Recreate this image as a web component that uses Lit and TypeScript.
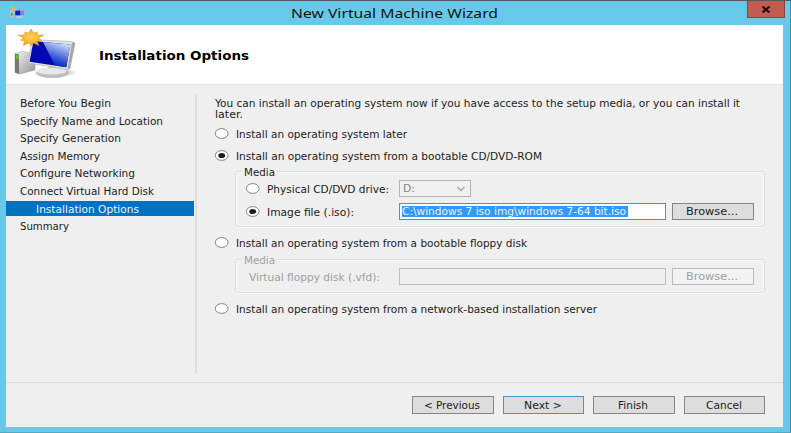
import { LitElement, html, svg, css, nothing } from "lit";
import { customElement } from "lit/decorators.js";

// Single line of text stretched to a given width, like the wide dialog font.
const line = (text: string, width: number, cls = "") => html`
  <svg class="line ${cls}" width=${width} height="11">
    <text x="0" y="9" textLength=${width} lengthAdjust="spacingAndGlyphs">${text}</text>
  </svg>`;

const lineStyles = css`
  .line { display: block; overflow: visible; flex: none; font: 10px "DejaVu Sans", sans-serif; fill: #1c1c1c; white-space: pre; }
  .line.white { fill: #e8f4ff; }
  .line.dim { fill: #a0a0a0; }
  .line.mid { fill: #858585; }
`;

@customElement("vm-icon")
class VmIcon extends LitElement {
  static styles = css`:host { display: block; } svg { display: block; width: 100%; height: 100%; }`;
  render() {
    const rays = Array.from({ length: 20 }, (_, i) => {
      const r = i % 2 ? 0.58 : i % 4 ? 0.84 : 1.04;
      const a = (i * Math.PI) / 10 - Math.PI / 2;
      return `${(17 + Math.cos(a) * 13 * r).toFixed(1)},${(9 + Math.sin(a) * 9 * r).toFixed(1)}`;
    }).join(" ");
    return html`<svg viewBox="0 0 64 50" preserveAspectRatio="none">
      <defs>
        <linearGradient id="glare" x1="0.2" y1="1" x2="0.6" y2="0">
          <stop offset="0" stop-color="#0414c4" /><stop offset=".3" stop-color="#1c3ccc" /><stop offset="1" stop-color="#c8dcfa" />
        </linearGradient>
        <linearGradient id="metal" x1="0" y1="0" x2="1" y2="1">
          <stop offset="0" stop-color="#f4f4f4" /><stop offset="1" stop-color="#969696" />
        </linearGradient>
        <radialGradient id="sun"><stop offset="0" stop-color="#ffd75a" /><stop offset="1" stop-color="#f3a21c" /></radialGradient>
        <radialGradient id="shadow"><stop offset="0" stop-color="#888" stop-opacity=".6" /><stop offset="1" stop-color="#888" stop-opacity="0" /></radialGradient>
      </defs>
      <ellipse cx="49" cy="43.500" rx="15" ry="4" fill="url(#shadow)" />
      <path d="M1 24.500 9 22.500 21 25V41L5.500 45 1 43.500Z" fill="url(#metal)" stroke="#999" stroke-width=".5" />
      <path d="M1 24.500 5 25.500V45L1 43.500Z" fill="#777" />
      <path d="M2 26 4.500 26.500V30L2 29.500Z" fill="#69c52d" />
      <path d="M35 36H46L47 42H34Z" fill="#aaa" />
      <ellipse cx="38.500" cy="43.800" rx="16.500" ry="5.200" fill="#bdbdbd" />
      <ellipse cx="37.500" cy="42.200" rx="14.500" ry="3.400" fill="#e8e8e8" />
      <path d="M18 10.500 57.500 12.500 61 14 56 39.500 53.500 40.500 14 34Z" fill="#e2e2e2" stroke="#aaa" stroke-width=".6" />
      <path d="M61 14 56 39.500 53.500 40.500 58 13.500Z" fill="#a5a5a5" />
      <path d="M19.500 12 56.300 15.500 52.300 38.300 15.500 32.800Z" fill="#0208b0" />
      <path d="M29 12.900 56.300 15.500 52.300 38.300 41 36.600Z" fill="url(#glare)" />
      ${svg`<polygon points=${rays} fill="url(#sun)" stroke="#e79a22" stroke-width=".5" />`}
    </svg>`;
  }
}

@customElement("dialog-button")
class DialogButton extends LitElement {
  static properties = { label: {}, width: { type: Number }, kind: {} };
  declare label: string;
  declare width: number;
  declare kind: string;
  static styles = [lineStyles, css`
    :host { display: block; width: 82px; flex: none; }
    .btn { box-sizing: border-box; width: 100%; height: 100%; display: flex; align-items: center; justify-content: center; border: 1px solid #858585; background: #ddd; padding-right: 1.500px; }
    .primary { border-color: #4d92c6; }
    .disabled { border-color: #b9bdc0; background: #f2f2f2; }
  `];
  render() {
    return html`<div class="btn ${this.kind ?? ""}">${line(this.label, this.width, this.kind === "disabled" ? "dim" : "")}</div>`;
  }
}

@customElement("option-radio")
class OptionRadio extends LitElement {
  static properties = { label: {}, width: { type: Number }, checked: { type: Boolean } };
  declare label: string;
  declare width: number;
  declare checked: boolean;
  static styles = [lineStyles, css`
    :host { display: flex; align-items: center; gap: 7px; height: 11px; }
    .dot { display: block; overflow: visible; flex: none; }
    .line { margin-top: 1px; }
  `];
  render() {
    return html`<svg class="dot" width="15" height="11">
        <ellipse cx="7.700" cy="5.500" rx="6.400" ry="4.900" fill="#fff" stroke="#858585" stroke-width="1" />
        ${this.checked ? svg`<ellipse cx="7.700" cy="5.500" rx="3.400" ry="2.600" fill="#1c1c1c" />` : nothing}
      </svg>${line(this.label, this.width)}`;
  }
}

const steps: [string, number][] = [
  ["Before You Begin", 91],
  ["Specify Name and Location", 143],
  ["Specify Generation", 101],
  ["Assign Memory", 80],
  ["Configure Networking", 115],
  ["Connect Virtual Hard Disk", 134],
  ["Installation Options", 103],
  ["Summary", 49],
];

@customElement("app-root")
class AppRoot extends LitElement {
  static styles = [lineStyles, css`
    :host { display: block; }
    .window { box-sizing: border-box; width: 791px; height: 433px; background: #66c9e9; border-top: 1px solid #57585a; border-right: 1px solid #4b8ba6; border-bottom: 1px solid #55a6c2; display: flex; flex-direction: column; padding: 0 6px 5px; overflow: hidden; }
    .titlebar { height: 24px; flex: none; display: grid; grid-template-columns: 38px 1fr 38px; }
    .small { display: block; width: 16px; height: 12px; margin: 5px 0 0 3px; }
    .caption { justify-self: center; margin: 5px 0 0 -1px; display: block; overflow: visible; font: 12.5px "Noto Sans", sans-serif; fill: #111; }
    .close { box-sizing: border-box; height: 17px; width: 38px; margin-left: 1px; background: #c25b50; border: 1px solid #84443f; border-top: 0; display: flex; align-items: center; justify-content: center; }
    .client { flex: 1; background: #efefef; display: flex; flex-direction: column; margin-right: 1px; }
    .header { height: 59px; flex: none; background: #fff; border-bottom: 1px solid #e3e3e3; display: flex; }
    .big { width: 64px; height: 50px; margin: 4px 0 0 8px; }
    .heading { display: block; overflow: visible; margin: 22px 0 0 20.500px; font: bold 12px "DejaVu Sans", sans-serif; fill: #000; }
    .body { height: 297px; flex: none; display: flex; }
    .steps { width: 189px; height: 278px; margin: 10px 0 9px; display: flex; flex-direction: column; gap: 2.600px; border-right: 2px solid #dcdcdc; }
    .step { height: 15px; width: 188px; box-sizing: border-box; padding: 3px 0 0 14px; flex: none; }
    .current { background: #0072bf; padding-left: 30px; }
    .options { flex: 1; padding: 13px 18px 0 17px; }
    .intro { padding-left: 0.500px; margin-bottom: 8px; }
    .boot { margin-top: 11px; }
    .floppy, .network { margin-top: 10px; }
    .group { position: relative; box-sizing: border-box; margin: 10px 0 0 21px; width: 530px; height: 56px; border: 1px solid #d4dfe5; border-radius: 3px; box-shadow: inset 0 0 0 1px #f8f8f8, 0 1px #fafafa; padding: 8px 11px 0 9px; display: flex; flex-direction: column; gap: 6px; }
    .second { height: 34px; margin-top: 11px; }
    .legend { position: absolute; left: 6px; top: -5px; background: #efefef; padding: 0 2px; }
    .row { display: grid; grid-template-columns: 148px 267px 82px; column-gap: 6px; height: 17px; align-items: center; }
    .row > dialog-button { height: 17px; }
    .indent { margin: 1px 0 0 4px; }
    .field { box-sizing: border-box; height: 17px; border: 1px solid #5b8db8; background: #fff; padding: 2px; display: flex; }
    .selected { background: #3399ff; width: 226px; height: 11px; }
    .off { background: #efefef; border-color: #bcc0c3; }
    .select { box-sizing: border-box; width: 72px; height: 17px; border: 1px solid #b4b4b4; background: #f1f1f1; display: flex; align-items: center; justify-content: space-between; padding: 0 4px 0 3px; }
    .footer { flex: 1; border-top: 1px solid #dadada; display: flex; justify-content: flex-end; gap: 9px; padding: 13px 17.600px 0 0; }
    .footer dialog-button { height: 18px; width: 81.600px; }
  `];

  render() {
    return html`
      <div class="window">
        <div class="titlebar">
          <svg class="small" viewBox="0 0 16 12">
            <path d="M1 5H5.200V11.300H1Z" fill="#b9c0c4" /><path d="M2 7H3.800V9.500H2Z" fill="#4f9a4a" />
            <path d="M5.500 3.800H16V10.300H5.500Z" fill="#a9b9d6" /><path d="M6.200 4.500H11.500V9.300H6.200Z" fill="#1020c0" /><path d="M11 4.500H15.300V9.300H12Z" fill="#6f8fe4" />
            <path d="M8 10.300H13L14 11.800H7Z" fill="#c6d3da" />
            <path d="M4.500 0 5.500 1.700 8 1.500 6.500 3 7.500 5 4.500 4 2 5 2.700 3 1 1.500 3.500 1.700Z" fill="#efb84a" />
          </svg>
          <svg class="caption" width="207" height="16"><text x="0" y="12" textLength="207" lengthAdjust="spacingAndGlyphs">New Virtual Machine Wizard</text></svg>
          <div class="close"><svg width="10" height="7" viewBox="0 0 10 7"><path d="M1.500 .5 8.500 6.500M8.500 .5 1.500 6.500" stroke="#111" stroke-width="2" /></svg></div>
        </div>
        <div class="client">
          <div class="header">
            <vm-icon class="big"></vm-icon>
            <svg class="heading" width="150" height="15"><text x="0" y="13" textLength="150" lengthAdjust="spacingAndGlyphs">Installation Options</text></svg>
          </div>
          <div class="body">
            <div class="steps">
              ${steps.map(([name, w], i) => html`<div class="step ${i === 6 ? "current" : ""}">${line(name, w, i === 6 ? "white" : "")}</div>`)}
            </div>
            <div class="options">
              <div class="intro">
                ${line("You can install an operating system now if you have access to the setup media, or you can install it", 525)}
                ${line("later.", 28)}
              </div>
              <option-radio label="Install an operating system later" width="171"></option-radio>
              <option-radio class="boot" checked label="Install an operating system from a bootable CD/DVD-ROM" width="306"></option-radio>
              <div class="group">
                <div class="legend">${line("Media", 31)}</div>
                <div class="row">
                  <option-radio label="Physical CD/DVD drive:" width="122"></option-radio>
                  <div class="select">${line("D:", 12, "mid")}<svg width="10" height="6" viewBox="0 0 10 6"><path d="M1.500 1 5 4.500 8.500 1" fill="none" stroke="#a8a8a8" stroke-width="1.500" /></svg></div>
                </div>
                <div class="row">
                  <option-radio checked label="Image file (.iso):" width="87"></option-radio>
                  <div class="field"><div class="selected">${line("C:\\windows 7 iso img\\windows 7-64 bit.iso", 224, "white")}</div></div>
                  <dialog-button label="Browse..." width="52"></dialog-button>
                </div>
              </div>
              <option-radio class="floppy" label="Install an operating system from a bootable floppy disk" width="291"></option-radio>
              <div class="group second">
                <div class="legend">${line("Media", 31, "dim")}</div>
                <div class="row">
                  <div class="indent">${line("Virtual floppy disk (.vfd):", 131, "dim")}</div>
                  <div class="field off"></div>
                  <dialog-button kind="disabled" label="Browse..." width="52"></dialog-button>
                </div>
              </div>
              <option-radio class="network" label="Install an operating system from a network-based installation server" width="361"></option-radio>
            </div>
          </div>
          <div class="footer">
            <dialog-button label="&lt; Previous" width="56"></dialog-button>
            <dialog-button kind="primary" label="Next &gt;" width="38"></dialog-button>
            <dialog-button label="Finish" width="30"></dialog-button>
            <dialog-button label="Cancel" width="36"></dialog-button>
          </div>
        </div>
      </div>`;
  }
}
